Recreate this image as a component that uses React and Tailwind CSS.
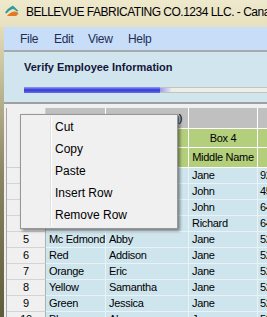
import React from 'react'

const font = { fontFamily: '"Liberation Sans", Arial, sans-serif' }

// first four names sit under the context menu in the picture
const rows = [
  ['1', '', '', 'Jane', '92301'],
  ['2', '', '', 'John', '45120'],
  ['3', '', '', 'John', '64418'],
  ['4', '', '', 'Richard', '64502'],
  ['5', 'Mc Edmond', 'Abby', 'Jane', '52110'],
  ['6', 'Red', 'Addison', 'Jane', '52111'],
  ['7', 'Orange', 'Eric', 'Jane', '52112'],
  ['8', 'Yellow', 'Samantha', 'Jane', '52113'],
  ['9', 'Green', 'Jessica', 'Jane', '52114'],
  ['10', 'Blue', 'Alex', 'Jane', '52115'],
]

const menuItems = ['Cut', 'Copy', 'Paste', 'Insert Row', 'Remove Row']

const Logo = () => (
  <svg width="14" height="12" viewBox="0 0 14 12">
    <path d="M0 7.5 Q3 3 7 1 Q8 0.5 9 1.5 L13.5 6 L11.5 6.5 Q9.5 3.5 7.5 4 Q4 5 1.5 8.5 Z" fill="#2e9c9a" />
    <path d="M2 11 Q5 7 9 6.5 Q11 6.3 13.5 8 Q13 10 11 11 Z" fill="#e27a22" />
  </svg>
)

const App = () => {
  return (
    <div className='w-[267px] h-[317px] overflow-hidden relative flex flex-col bg-[#ebe5c6] text-black' style={font}>
      {/* title bar */}
      <div className='h-[27px] shrink-0 flex items-start bg-gradient-to-b from-[#efe9cd] to-[#e7e0bf]'>
        <div className='ml-[5px] mt-[5px]'><Logo /></div>
        <div className='ml-[7px] mt-[4px] text-[12px] leading-[16px] whitespace-nowrap tracking-[-0.5px]'>
          BELLEVUE FABRICATING CO.1234 LLC. - Canada
        </div>
      </div>

      <div className='flex flex-1 min-h-0'>
        <div className='w-[4px] shrink-0 bg-gradient-to-b from-[#e4dcb8] via-[#8c8662] to-[#5f5b3e]' />
        <div className='flex-1 flex flex-col min-w-0'>
          {/* menu bar */}
          <div className='h-[23px] shrink-0 flex items-center pl-[16px] bg-[#c8ddf8] text-[12px] text-[#1d2d55] tracking-[-0.3px]'>
            <div className='w-[34px]'>File</div>
            <div className='w-[34px]'>Edit</div>
            <div className='w-[40px]'>View</div>
            <div>Help</div>
          </div>
          <div className='h-[2px] shrink-0 bg-[#a7a9ab]' />

          {/* header panel */}
          <div className='h-[50px] shrink-0 bg-[#d0e5ee] pl-[20px] pt-[8px]'>
            <div className='text-[11px] leading-[14px] font-bold text-[#15163a] whitespace-nowrap'>Verify Employee Information</div>
            <div className='mt-[13px] h-[6px] border-y border-[#c4c4bc] bg-[#eeeee8] flex'>
              <div className='w-[136px] h-full -my-px py-px box-content bg-gradient-to-b from-[#9a9af0] via-[#3434d6] to-[#6c6ce6]' />
              <div className='w-[12px] h-full bg-gradient-to-r from-[#9c9ce8] to-[#eeeee8]' />
            </div>
          </div>
          <div className='h-[2px] shrink-0 bg-[#a0a0a0]' />

          {/* grid */}
          <div className='flex-1 bg-[#f0f0f0] pt-[4px] pl-[2px]'>
            <div className='border-l border-[#a8a8a8] text-[11px] tracking-[-0.3px] whitespace-nowrap'>
              <div className='flex'>
                <div className='w-[39px] h-[60px] shrink-0 bg-[#f0f0f0] border-r border-b border-[#d0d0d0]' />
                <div className='flex flex-col'>
                  <div className='flex h-[21px] bg-[#c0c0c0] border-b border-white'>
                    <div className='w-[60px] border-r border-white' />
                    <div className='w-[83px] border-r border-white flex items-center justify-end pr-[6px]'>(Req)</div>
                    <div className='w-[69px] border-r border-white' />
                    <div className='w-[80px]' />
                  </div>
                  <div className='flex h-[19px] bg-[#b4cf7b] border-b border-white'>
                    <div className='w-[60px] border-r border-white' />
                    <div className='w-[83px] border-r border-white' />
                    <div className='w-[69px] border-r border-white flex items-center justify-center'>Box 4</div>
                    <div className='w-[80px]' />
                  </div>
                  <div className='flex h-[20px] bg-[#b4cf7b] border-b border-white'>
                    <div className='w-[60px] border-r border-white' />
                    <div className='w-[83px] border-r border-white' />
                    <div className='w-[69px] border-r border-white flex items-center justify-center'>Middle Name</div>
                    <div className='w-[80px]' />
                  </div>
                </div>
              </div>
              {rows.map(r => (
                <div key={r[0]} className='flex h-[16px] leading-[15px]'>
                  <div className='w-[39px] shrink-0 bg-[#f0f0f0] border-r border-b border-r-[#b0b0b0] border-b-[#d4d4d4] text-center'>{r[0]}</div>
                  <div className='w-[60px] shrink-0 bg-[#cfe5ed] border-r border-b border-[#e9f2f4] pl-[3px] overflow-hidden'>{r[1]}</div>
                  <div className='w-[83px] shrink-0 bg-[#cfe5ed] border-r border-b border-[#e9f2f4] pl-[3px]'>{r[2]}</div>
                  <div className='w-[69px] shrink-0 bg-[#cfe5ed] border-r border-b border-[#e9f2f4] pl-[3px]'>{r[3]}</div>
                  <div className='w-[80px] shrink-0 bg-[#cfe5ed] border-b border-[#e9f2f4] pl-[2px]'>{r[4]}</div>
                </div>
              ))}
            </div>
          </div>
        </div>
      </div>

      {/* context menu */}
      <div className='absolute left-[20px] top-[114px] w-[158px] h-[115px] bg-[#f0f0f0] border border-[#979797] pt-[1px] pb-[2px] shadow-[2px_2px_3px_rgba(0,0,0,0.45)] text-[12px]'>
        <div className='absolute left-[29px] top-[2px] bottom-[2px] w-px bg-[#e0e0e0]' />
        <div className='absolute left-[30px] top-[2px] bottom-[2px] w-px bg-white' />
        {menuItems.map(m => (
          <div key={m} className='h-[22px] flex items-center pl-[34px] relative'>{m}</div>
        ))}
      </div>
    </div>
  )
}

export default App
